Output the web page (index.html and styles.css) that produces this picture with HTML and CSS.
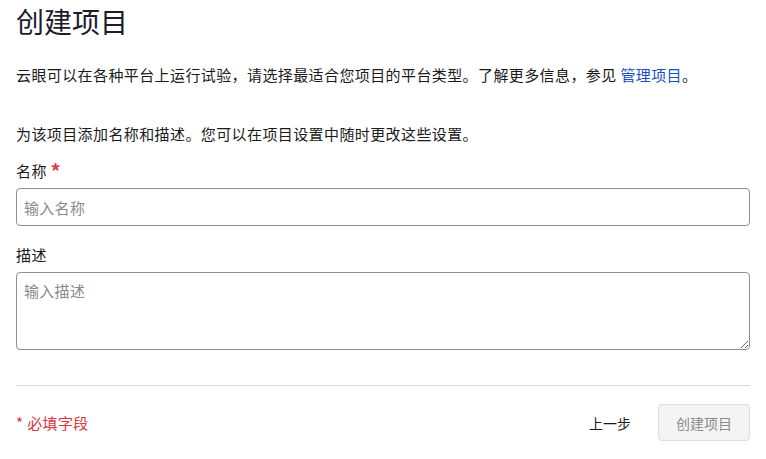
FILE: index.html
```html
<!DOCTYPE html>
<html lang="zh-CN">
<head>
<meta charset="utf-8">
<title>创建项目</title>
<link rel="stylesheet" href="styles.css">
</head>
<body>
<main class="page">
  <h1 class="title">创建项目</h1>
  <p class="intro">云眼可以在各种平台上运行试验，请选择最适合您项目的平台类型。了解更多信息，参见 <a class="link" href="#">管理项目</a>。</p>
  <p class="hint">为该项目添加名称和描述。您可以在项目设置中随时更改这些设置。</p>
  <form class="form">
    <div class="field">
      <label class="label" for="name">名称 <span class="req">*</span></label>
      <input class="input" id="name" type="text" placeholder="输入名称">
    </div>
    <div class="field field-desc">
      <label class="label" for="desc">描述</label>
      <textarea class="textarea" id="desc" placeholder="输入描述"></textarea>
    </div>
    <hr class="divider">
    <div class="footer">
      <span class="required-note">* 必填字段</span>
      <div class="actions">
        <button type="button" class="btn-back">上一步</button>
        <button type="button" class="btn-create" disabled>创建项目</button>
      </div>
    </div>
  </form>
</main>
</body>
</html>
```

FILE: styles.css
```css
html, body {
  margin: 0;
  padding: 0;
  background: #ffffff;
}
body {
  font-family: "Noto Sans CJK SC", "Noto Sans", "Liberation Sans", sans-serif;
  color: #1a1a1a;
}
.page {
  padding: 0 16px;
}
.title {
  margin: 0;
  font-size: 28px;
  line-height: 42px;
  font-weight: 400;
  color: #1c1c2c;
}
.intro {
  margin: 22px 0 0;
  font-size: 15px;
  line-height: 22px;
  letter-spacing: 0.4px;
}
.link {
  color: #1a4fc0;
  text-decoration: none;
}
.hint {
  margin: 37px 0 0;
  font-size: 15px;
  line-height: 22px;
  letter-spacing: 0.4px;
}
.form {
  margin: 15px 0 0;
}
.field {
  display: flex;
  flex-direction: column;
  gap: 6px;
}
.field-desc {
  margin-top: 18px;
}
.label {
  font-size: 15px;
  line-height: 22px;
  letter-spacing: 0.4px;
}
.req {
  color: #e0393e;
  font-size: 20px;
  font-weight: 700;
  line-height: 0;
  vertical-align: -2px;
}
.input, .textarea {
  box-sizing: border-box;
  width: 100%;
  margin: 0;
  border: 1px solid #8f8f8f;
  border-radius: 4px;
  font-family: inherit;
  font-size: 15px;
  letter-spacing: 0.3px;
  color: #1a1a1a;
  background: #fff;
  padding: 0 7px;
  outline: none;
}
.input {
  height: 38px;
}
.textarea {
  height: 78px;
  padding-top: 7px;
  line-height: 22px;
  resize: vertical;
  display: block;
}
.input::placeholder, .textarea::placeholder {
  color: #8a8a8a;
}
.divider {
  margin: 35px 0 0;
  border: 0;
  border-top: 1px solid #d9d9d9;
  height: 0;
}
.footer {
  margin-top: 18px;
  display: flex;
  align-items: center;
  justify-content: space-between;
}
.required-note {
  color: #d9363e;
  font-size: 15px;
  line-height: 22px;
  letter-spacing: 0.4px;
}
.actions {
  display: flex;
  align-items: center;
  gap: 27px;
}
.btn-back {
  border: 0;
  background: none;
  padding: 0;
  font-family: inherit;
  font-size: 14px;
  color: #1a1a1a;
}
.btn-create {
  box-sizing: border-box;
  width: 92px;
  height: 37px;
  border: 1px solid #dcdcdc;
  border-radius: 4px;
  background: #f4f4f4;
  font-family: inherit;
  font-size: 14px;
  color: #8a8a8a;
}
```
